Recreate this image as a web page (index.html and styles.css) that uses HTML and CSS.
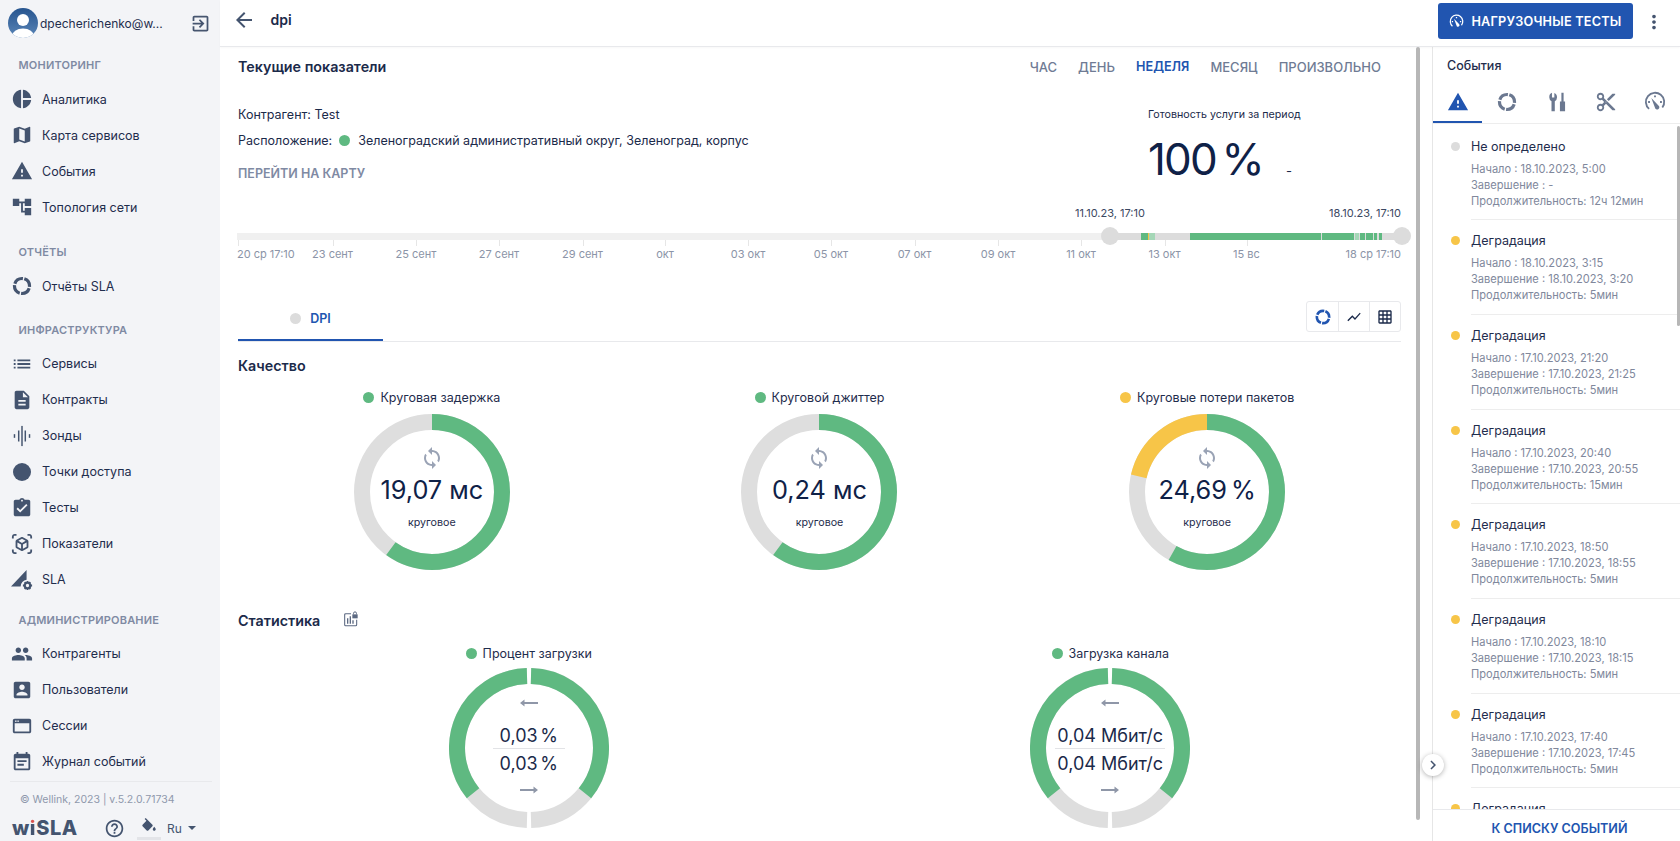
FILE: index.html
```html
<!DOCTYPE html>
<html lang="ru">
<head>
<meta charset="utf-8">
<title>dpi</title>
<link rel="stylesheet" href="styles.css">
</head>
<body>
<svg class="sprite" xmlns="http://www.w3.org/2000/svg">
  <symbol id="i-pie" viewBox="0 0 24 24"><path d="M11 2v20c-5.07-.5-9-4.79-9-10s3.93-9.5 9-10zm2.03 0v8.99H22c-.47-4.74-4.24-8.52-8.97-8.99zm0 11.01V22c4.74-.47 8.5-4.25 8.97-8.99h-8.97z"/></symbol>
  <symbol id="i-map" viewBox="0 0 24 24"><path d="M20.5 3l-.16.03L15 5.1 9 3 3.36 4.9c-.21.07-.36.25-.36.48V20.5c0 .28.22.5.5.5l.16-.03L9 18.9l6 2.1 5.64-1.9c.21-.07.36-.25.36-.48V3.5c0-.28-.22-.5-.5-.5zM15 19l-6-2.11V5l6 2.11V19z"/></symbol>
  <symbol id="i-warn" viewBox="0 0 24 24"><path d="M1 21h22L12 2 1 21zm12-3h-2v-2h2v2zm0-4h-2v-4h2v4z"/></symbol>
  <symbol id="i-topo" viewBox="0 0 24 24"><path d="M22 11V3h-7v3H9V3H2v8h7V8h2v10h4v3h7v-8h-7v3h-2V8h2v3z"/></symbol>
  <symbol id="i-ring" viewBox="0 0 24 24"><circle cx="12" cy="12" r="8.200" fill="none" stroke="currentColor" stroke-width="3.500" pathLength="100" stroke-dasharray="22 3" stroke-dashoffset="-5"/></symbol>
  <symbol id="i-list" viewBox="0 0 24 24"><path d="M3 13h2v-2H3v2zm0 4h2v-2H3v2zm0-8h2V7H3v2zm4 4h14v-2H7v2zm0 4h14v-2H7v2zM7 7v2h14V7H7z"/></symbol>
  <symbol id="i-doc" viewBox="0 0 24 24"><path d="M14 2H6c-1.1 0-1.99.9-1.99 2L4 20c0 1.1.89 2 1.99 2H18c1.1 0 2-.9 2-2V8l-6-6zm2 16H8v-2h8v2zm0-4H8v-2h8v2zm-3-5V3.5L18.5 9H13z"/></symbol>
  <symbol id="i-probe" viewBox="0 0 24 24"><rect x="3" y="10" width="1.6" height="4"/><rect x="7.6" y="6" width="1.6" height="12"/><rect x="11.2" y="1" width="1.6" height="22"/><rect x="14.8" y="6" width="1.6" height="12"/><rect x="19.4" y="10" width="1.6" height="4"/></symbol>
  <symbol id="i-test" viewBox="0 0 24 24"><path d="M19 3h-4.18C14.4 1.84 13.3 1 12 1c-1.3 0-2.4.84-2.82 2H5c-1.1 0-2 .9-2 2v14c0 1.1.9 2 2 2h14c1.1 0 2-.9 2-2V5c0-1.1-.9-2-2-2zm-7 0c.55 0 1 .45 1 1s-.45 1-1 1-1-.45-1-1 .45-1 1-1zm-2 14l-4-4 1.41-1.41L10 14.17l6.59-6.59L18 9l-8 8z"/></symbol>
  <symbol id="i-ar" viewBox="0 0 24 24"><path d="M3 4c0-.55.45-1 1-1h2V1H4C2.34 1 1 2.34 1 4v2h2V4zm0 16v-2H1v2c0 1.66 1.34 3 3 3h2v-2H4c-.55 0-1-.45-1-1zM20 1h-2v2h2c.55 0 1 .45 1 1v2h2V4c0-1.66-1.34-3-3-3zm1 19c0 .55-.45 1-1 1h-2v2h2c1.66 0 3-1.34 3-3v-2h-2v2zm-2-5.13V9.13c0-.72-.38-1.38-1-1.73l-5-2.88c-.31-.18-.65-.27-1-.27s-.69.09-1 .27L6 7.39c-.62.36-1 1.02-1 1.74v5.74c0 .72.38 1.38 1 1.73l5 2.88c.31.18.65.27 1 .27s.69-.09 1-.27l5-2.88c.62-.35 1-1.01 1-1.73zm-8 2.3l-4-2.3v-4.63l4 2.33v4.6zm1-6.33L8.04 8.53 12 6.25l3.96 2.28L12 10.84zm5 4.03l-4 2.3v-4.6l4-2.33v4.63z"/></symbol>
  <symbol id="i-sla" viewBox="0 0 24 24"><path d="M0 19L17 1v10.600a7.500 7.500 0 0 0-6.500 7.400z"/><circle cx="18" cy="18" r="3" fill="none" stroke="currentColor" stroke-width="2.400"/><path d="M17 13h2v2h-2zM17 21h2v2h-2zM13 17h2v2h-2zM21 17h2v2h-2zM14.200 14.900l1.400-1.400 1.400 1.400-1.400 1.400zM19 14.900l1.400-1.400 1.400 1.400-1.400 1.400zM14.200 21.100l1.400-1.400 1.400 1.400-1.400 1.400zM19 21.100l1.400-1.400 1.400 1.400-1.400 1.400z"/></symbol>
  <symbol id="i-people" viewBox="0 0 24 24"><path d="M16 11c1.66 0 2.99-1.34 2.99-3S17.66 5 16 5c-1.66 0-3 1.34-3 3s1.34 3 3 3zm-8 0c1.66 0 2.99-1.34 2.99-3S9.66 5 8 5C6.34 5 5 6.34 5 8s1.34 3 3 3zm0 2c-2.33 0-7 1.17-7 3.5V19h14v-2.5c0-2.33-4.67-3.5-7-3.5zm8 0c-.29 0-.62.02-.97.05 1.16.84 1.97 1.97 1.97 3.45V19h6v-2.5c0-2.33-4.67-3.5-7-3.5z"/></symbol>
  <symbol id="i-user" viewBox="0 0 24 24"><path d="M3 5v14c0 1.1.89 2 2 2h14c1.1 0 2-.9 2-2V5c0-1.1-.9-2-2-2H5c-1.11 0-2 .9-2 2zm12 4c0 1.66-1.34 3-3 3s-3-1.34-3-3 1.34-3 3-3 3 1.34 3 3zm-9 8c0-2 4-3.1 6-3.1s6 1.1 6 3.1v1H6v-1z"/></symbol>
  <symbol id="i-web" viewBox="0 0 24 24"><path d="M20 4H4c-1.1 0-2 .9-2 2v12c0 1.1.9 2 2 2h16c1.1 0 2-.9 2-2V6c0-1.1-.9-2-2-2zM4 18V9h16v9H4z"/><rect x="4.5" y="6" width="1.5" height="1.5" fill="#f3f4f7"/><rect x="7" y="6" width="1.5" height="1.5" fill="#f3f4f7"/></symbol>
  <symbol id="i-note" viewBox="0 0 24 24"><path d="M17 10H7v2h10v-2zm2-7h-1V1h-2v2H8V1H6v2H5c-1.11 0-1.99.9-1.99 2L3 19c0 1.1.89 2 2 2h14c1.1 0 2-.9 2-2V5c0-1.1-.9-2-2-2zm0 16H5V8h14v11zm-5-5H7v2h7v-2z"/></symbol>
  <symbol id="i-exit" viewBox="0 0 24 24"><path d="M10.09 15.59L11.5 17l5-5-5-5-1.41 1.41L12.67 11H3v2h9.67l-2.58 2.59zM19 3H5c-1.11 0-2 .9-2 2v4h2V5h14v14H5v-4H3v4c0 1.1.89 2 2 2h14c1.1 0 2-.9 2-2V5c0-1.1-.9-2-2-2z"/></symbol>
  <symbol id="i-help" viewBox="0 0 24 24"><path d="M11 18h2v-2h-2v2zm1-16C6.48 2 2 6.48 2 12s4.48 10 10 10 10-4.48 10-10S17.52 2 12 2zm0 18c-4.41 0-8-3.59-8-8s3.59-8 8-8 8 3.59 8 8-3.59 8-8 8zm0-14c-2.21 0-4 1.79-4 4h2c0-1.1.9-2 2-2s2 .9 2 2c0 2-3 1.75-3 5h2c0-2.25 3-2.5 3-5 0-2.21-1.79-4-4-4z"/></symbol>
  <symbol id="i-fill" viewBox="0 0 24 24"><path d="M16.56 8.94L7.62 0 6.21 1.41l2.38 2.38-5.15 5.15c-.59.59-.59 1.54 0 2.12l5.5 5.5c.29.29.68.44 1.06.44s.77-.15 1.06-.44l5.5-5.5c.59-.58.59-1.53 0-2.12zM19 11.5s-2 2.17-2 3.5c0 1.1.9 2 2 2s2-.9 2-2c0-1.33-2-3.5-2-3.5z"/></symbol>
  <symbol id="i-back" viewBox="0 0 24 24"><path d="M20 11H7.83l5.59-5.59L12 4l-8 8 8 8 1.41-1.41L7.83 13H20v-2z"/></symbol>
  <symbol id="i-more" viewBox="0 0 24 24"><path d="M12 8c1.1 0 2-.9 2-2s-.9-2-2-2-2 .9-2 2 .9 2 2 2zm0 2c-1.1 0-2 .9-2 2s.9 2 2 2 2-.9 2-2-.9-2-2-2zm0 6c-1.1 0-2 .9-2 2s.9 2 2 2 2-.9 2-2-.9-2-2-2z"/></symbol>
  <symbol id="i-gauge" viewBox="0 0 24 24"><path d="M5.500 19.500A10 10 0 1 1 20 18" fill="none" stroke="currentColor" stroke-width="2"/><path d="M11 4.800h2v2h-2zM4.500 11h2v2h-2zM17.500 11h2v2h-2z"/><path d="M8 7.500l8 8.500a2.400 2.400 0 1 1-4 2.200z"/></symbol>
  <symbol id="i-tools" viewBox="0 0 24 24"><path d="M6.500 2v5.200h2.600V2.200A5 5 0 0 1 12 7a5 5 0 0 1-2.400 4.200V22H6V11.200A5 5 0 0 1 3.600 7a5 5 0 0 1 2.900-5z"/><path d="M16.800 2h2.400v9.400h1.600V22h-5.600V11.400h1.600z"/></symbol>
  <symbol id="i-cut" viewBox="0 0 24 24"><path d="M9.64 7.64c.23-.5.36-1.05.36-1.64 0-2.21-1.79-4-4-4S2 3.79 2 6s1.79 4 4 4c.59 0 1.14-.13 1.64-.36L10 12l-2.36 2.36C7.14 14.13 6.59 14 6 14c-2.21 0-4 1.79-4 4s1.79 4 4 4 4-1.79 4-4c0-.59-.13-1.14-.36-1.64L12 14l7 7h3v-1L9.64 7.64zM6 8c-1.1 0-2-.89-2-2s.9-2 2-2 2 .89 2 2-.9 2-2 2zm0 12c-1.1 0-2-.89-2-2s.9-2 2-2 2 .89 2 2-.9 2-2 2zm6-7.5c-.28 0-.5-.22-.5-.5s.22-.5.5-.5.5.22.5.5-.22.5-.5.5zM19 3l-6 6 2 2 7-7V3h-3z"/></symbol>
  <symbol id="i-chart" viewBox="0 0 24 24"><path d="M3.500 18.490l6-6.010 4 4L22 6.920l-1.410-1.410-7.090 7.970-4-4L2 16.990z"/></symbol>
  <symbol id="i-grid" viewBox="0 0 24 24"><path d="M20 2H4c-1.100 0-2 .9-2 2v16c0 1.100.9 2 2 2h16c1.100 0 2-.9 2-2V4c0-1.100-.9-2-2-2zM8 20H4v-4h4v4zm0-6H4v-4h4v4zm0-6H4V4h4v4zm6 12h-4v-4h4v4zm0-6h-4v-4h4v4zm0-6h-4V4h4v4zm6 12h-4v-4h4v4zm0-6h-4v-4h4v4zm0-6h-4V4h4v4z"/></symbol>
  <symbol id="i-sync" viewBox="0 0 24 24"><path d="M12 4V1L8 5l4 4V6c3.31 0 6 2.69 6 6 0 1.01-.25 1.97-.7 2.8l1.46 1.46C19.54 15.03 20 13.57 20 12c0-4.42-3.58-8-8-8zm0 14c-3.31 0-6-2.69-6-6 0-1.01.25-1.97.7-2.8L5.24 7.74C4.46 8.97 4 10.43 4 12c0 4.42 3.58 8 8 8v3l4-4-4-4v3z"/></symbol>
  <symbol id="i-left" viewBox="0 0 18 10"><path d="M0 5l4.500-3.500V4H18v2H4.500v2.500z"/></symbol>
  <symbol id="i-right" viewBox="0 0 18 10"><path d="M18 5l-4.500-3.500V4H0v2h13.500v2.500z"/></symbol>
  <symbol id="i-stat" viewBox="0 0 24 24"><path d="M12 4H4a1.500 1.500 0 0 0-1.500 1.500v15A1.500 1.500 0 0 0 4 22h15a1.500 1.500 0 0 0 1.500-1.500V13" fill="none" stroke="currentColor" stroke-width="1.600"/><path d="M6 11h2v8H6zM10 8h2v11h-2zM14 14h2v5h-2z"/><path d="M14 5h8v6h-8z"/><path d="M15.800 5V3.500a2.200 2.200 0 0 1 4.400 0V5" fill="none" stroke="currentColor" stroke-width="1.500"/></symbol>
  <symbol id="i-chev" viewBox="0 0 24 24"><path d="M10 6L8.590 7.410 13.170 12l-4.580 4.590L10 18l6-6z"/></symbol>
</svg>

<div class="app">
  <aside class="sidebar">
    <div class="user">
      <svg class="avatar" viewBox="0 0 30 30"><defs><linearGradient id="av" x1="0" y1="0" x2="0" y2="1"><stop offset="0" stop-color="#27558f"/><stop offset="1" stop-color="#5b86b8"/></linearGradient><clipPath id="avc"><circle cx="15" cy="15" r="15"/></clipPath></defs><circle cx="15" cy="15" r="15" fill="url(#av)"/><circle cx="15" cy="12" r="6" fill="#fff"/><ellipse cx="15" cy="28" rx="11" ry="7.500" fill="#fff" clip-path="url(#avc)"/></svg>
      <span class="user-name">dpecherichenko@w...</span>
      <svg class="ico exit"><use href="#i-exit"/></svg>
    </div>
    <div class="nav-label nav-label-first">Мониторинг</div>
    <a class="nav-item"><svg class="ico"><use href="#i-pie"/></svg>Аналитика</a>
    <a class="nav-item"><svg class="ico"><use href="#i-map"/></svg>Карта сервисов</a>
    <a class="nav-item"><svg class="ico"><use href="#i-warn"/></svg>События</a>
    <a class="nav-item"><svg class="ico"><use href="#i-topo"/></svg>Топология сети</a>
    <div class="nav-label nav-label-reports">Отчёты</div>
    <a class="nav-item"><svg class="ico"><use href="#i-ring"/></svg>Отчёты SLA</a>
    <div class="nav-label nav-label-infra">Инфраструктура</div>
    <a class="nav-item"><svg class="ico"><use href="#i-list"/></svg>Сервисы</a>
    <a class="nav-item"><svg class="ico"><use href="#i-doc"/></svg>Контракты</a>
    <a class="nav-item"><svg class="ico"><use href="#i-probe"/></svg>Зонды</a>
    <a class="nav-item"><span class="nav-disc"></span>Точки доступа</a>
    <a class="nav-item"><svg class="ico"><use href="#i-test"/></svg>Тесты</a>
    <a class="nav-item"><svg class="ico"><use href="#i-ar"/></svg>Показатели</a>
    <a class="nav-item"><svg class="ico"><use href="#i-sla"/></svg>SLA</a>
    <div class="nav-label nav-label-admin">Администрирование</div>
    <a class="nav-item"><svg class="ico"><use href="#i-people"/></svg>Контрагенты</a>
    <a class="nav-item"><svg class="ico"><use href="#i-user"/></svg>Пользователи</a>
    <a class="nav-item"><svg class="ico"><use href="#i-web"/></svg>Сессии</a>
    <a class="nav-item"><svg class="ico"><use href="#i-note"/></svg>Журнал событий</a>
    <div class="side-foot">
      <div class="copy">© Wellink, 2023 | v.5.2.0.71734</div>
      <div class="brand-row">
        <span class="logo">w<span class="logo-i">i</span>SLA</span>
        <svg class="ico help"><use href="#i-help"/></svg>
        <span class="fill-wrap"><svg class="ico fill"><use href="#i-fill"/></svg></span>
        <span class="lang">Ru</span><span class="caret"></span>
      </div>
    </div>
  </aside>

  <div class="main">
    <header class="topbar">
      <svg class="ico back"><use href="#i-back"/></svg>
      <span class="page-title">dpi</span>
      <button class="primary"><svg class="ico btn-ico"><use href="#i-gauge"/></svg>Нагрузочные тесты</button>
      <svg class="ico more"><use href="#i-more"/></svg>
    </header>

    <div class="body">
      <section class="content">
        <div class="head-row">
          <h2 class="h">Текущие показатели</h2>
          <nav class="periods">
            <span>Час</span><span>День</span><span class="on">Неделя</span><span>Месяц</span><span>Произвольно</span>
          </nav>
        </div>

        <div class="info">
          <div class="info-left">
            <div class="info-line">Контрагент: Test</div>
            <div class="info-line">Расположение: <span class="dot green addr-dot"></span> Зеленоградский административный округ, Зеленоград, корпус</div>
            <div class="map-link">Перейти на карту</div>
          </div>
          <div class="avail">
            <div class="avail-cap">Готовность услуги за период</div>
            <div class="avail-row"><span class="avail-val">100 %</span><span class="avail-dash">-</span></div>
          </div>
        </div>

        <div class="timeline">
          <div class="tl-track"></div>
          <div class="tl-range"></div>
          <i class="tl-seg" style="left:903px;width:7px"></i>
          <i class="tl-seg yellow" style="left:910px;width:1px"></i>
          <i class="tl-seg light" style="left:911px;width:6px"></i>
          <i class="tl-seg" style="left:952px;width:131px"></i>
          <i class="tl-seg" style="left:1084px;width:32px"></i>
          <i class="tl-seg light" style="left:1117px;width:4px"></i>
          <i class="tl-seg" style="left:1122px;width:5px"></i>
          <i class="tl-seg" style="left:1128px;width:7px"></i>
          <i class="tl-seg" style="left:1136px;width:3px"></i>
          <i class="tl-seg" style="left:1141px;width:3px"></i>
          <i class="tl-handle" style="left:872px"></i>
          <i class="tl-handle" style="left:1164px"></i>
          <span class="tl-date tl-date-a">11.10.23, 17:10</span>
          <span class="tl-date tl-date-b">18.10.23, 17:10</span>
          <i class="tick" style="left:0"></i><span class="tl-lab first">20 ср 17:10</span>
          <i class="tick" style="left:94.500px"></i><span class="tl-lab" style="left:94.500px">23 сент</span>
          <i class="tick" style="left:178px"></i><span class="tl-lab" style="left:178px">25 сент</span>
          <i class="tick" style="left:261px"></i><span class="tl-lab" style="left:261px">27 сент</span>
          <i class="tick" style="left:344.500px"></i><span class="tl-lab" style="left:344.500px">29 сент</span>
          <i class="tick" style="left:427px"></i><span class="tl-lab" style="left:427px">окт</span>
          <i class="tick" style="left:510px"></i><span class="tl-lab" style="left:510px">03 окт</span>
          <i class="tick" style="left:593px"></i><span class="tl-lab" style="left:593px">05 окт</span>
          <i class="tick" style="left:676.500px"></i><span class="tl-lab" style="left:676.500px">07 окт</span>
          <i class="tick" style="left:760px"></i><span class="tl-lab" style="left:760px">09 окт</span>
          <i class="tick" style="left:843px"></i><span class="tl-lab" style="left:843px">11 окт</span>
          <i class="tick" style="left:926.500px"></i><span class="tl-lab" style="left:926.500px">13 окт</span>
          <i class="tick" style="left:1008.500px"></i><span class="tl-lab" style="left:1008.500px">15 вс</span>
          <span class="tl-lab last">18 ср 17:10</span>
        </div>

        <div class="tabs">
          <div class="tab"><span class="dot grey"></span>DPI</div>
          <div class="views">
            <span class="view"><svg class="ico view-on"><use href="#i-ring"/></svg></span>
            <span class="view"><svg class="ico"><use href="#i-chart"/></svg></span>
            <span class="view"><svg class="ico"><use href="#i-grid"/></svg></span>
          </div>
        </div>

        <h2 class="h h-quality">Качество</h2>
        <div class="gauges g3">
          <div class="gauge">
            <div class="g-title"><span class="dot green"></span>Круговая задержка</div>
            <div class="donut">
              <svg class="ring" viewBox="0 0 156 156"><circle class="r-grey" cx="78" cy="78" r="70" pathLength="100"/><circle class="r-green" cx="78" cy="78" r="70" pathLength="100" stroke-dasharray="60 40"/></svg>
              <div class="d-in"><svg class="ico sync"><use href="#i-sync"/></svg><div class="d-val">19,07 мс</div><div class="d-sub">круговое</div></div>
            </div>
          </div>
          <div class="gauge">
            <div class="g-title"><span class="dot green"></span>Круговой джиттер</div>
            <div class="donut">
              <svg class="ring" viewBox="0 0 156 156"><circle class="r-grey" cx="78" cy="78" r="70" pathLength="100"/><circle class="r-green" cx="78" cy="78" r="70" pathLength="100" stroke-dasharray="60 40"/></svg>
              <div class="d-in"><svg class="ico sync"><use href="#i-sync"/></svg><div class="d-val">0,24 мс</div><div class="d-sub">круговое</div></div>
            </div>
          </div>
          <div class="gauge">
            <div class="g-title"><span class="dot yellow"></span>Круговые потери пакетов</div>
            <div class="donut">
              <svg class="ring" viewBox="0 0 156 156"><circle class="r-grey" cx="78" cy="78" r="70" pathLength="100"/><circle class="r-green" cx="78" cy="78" r="70" pathLength="100" stroke-dasharray="58.200 41.800"/><circle class="r-yellow" cx="78" cy="78" r="70" pathLength="100" stroke-dasharray="21.400 78.600" stroke-dashoffset="-78.600"/></svg>
              <div class="d-in"><svg class="ico sync"><use href="#i-sync"/></svg><div class="d-val pct">24,69 %</div><div class="d-sub">круговое</div></div>
            </div>
          </div>
        </div>

        <div class="stat-head"><h2 class="h">Статистика</h2><svg class="ico stat-ico"><use href="#i-stat"/></svg></div>
        <div class="gauges g2">
          <div class="gauge">
            <div class="g-title"><span class="dot green"></span>Процент загрузки</div>
            <div class="donut donut2">
              <svg class="ring" viewBox="0 0 160 160"><path class="h-grey" d="M82 8.030A72 72 0 0 1 82 151.970"/><path class="h-grey" d="M78 8.030A72 72 0 0 0 78 151.970"/><path class="h-green" d="M82 8.030A72 72 0 0 1 135.950 125.300"/><path class="h-green" d="M78 8.030A72 72 0 0 0 24.050 125.300"/></svg>
              <div class="d-in2"><svg class="arrow"><use href="#i-left"/></svg><div class="v2 v2a pct">0,03 %</div><div class="v2 v2b pct">0,03 %</div><svg class="arrow"><use href="#i-right"/></svg></div>
            </div>
          </div>
          <div class="gauge">
            <div class="g-title"><span class="dot green"></span>Загрузка канала</div>
            <div class="donut donut2">
              <svg class="ring" viewBox="0 0 160 160"><path class="h-grey" d="M82 8.030A72 72 0 0 1 82 151.970"/><path class="h-grey" d="M78 8.030A72 72 0 0 0 78 151.970"/><path class="h-green" d="M82 8.030A72 72 0 0 1 135.950 125.300"/><path class="h-green" d="M78 8.030A72 72 0 0 0 24.050 125.300"/></svg>
              <div class="d-in2"><svg class="arrow"><use href="#i-left"/></svg><div class="v2 v2a">0,04 Мбит/с</div><div class="v2 v2b">0,04 Мбит/с</div><svg class="arrow"><use href="#i-right"/></svg></div>
            </div>
          </div>
        </div>
        <div class="scroll-main"></div>
      </section>

      <aside class="panel">
        <button class="collapse"><svg class="ico"><use href="#i-chev"/></svg></button>
        <div class="panel-title">События</div>
        <div class="panel-tabs">
          <span class="ptab on"><svg class="ico"><use href="#i-warn"/></svg></span>
          <span class="ptab"><svg class="ico"><use href="#i-ring"/></svg></span>
          <span class="ptab"><svg class="ico"><use href="#i-tools"/></svg></span>
          <span class="ptab"><svg class="ico"><use href="#i-cut"/></svg></span>
          <span class="ptab"><svg class="ico"><use href="#i-gauge"/></svg></span>
        </div>
        <div class="events">
          <div class="scroll-side"></div>
          <div class="ev"><span class="dot grey ev-dot"></span><div class="ev-b"><div class="ev-t">Не определено</div><div class="ev-l">Начало : 18.10.2023, 5:00</div><div class="ev-l">Завершение : -</div><div class="ev-l">Продолжительность: 12ч 12мин</div></div></div>
          <div class="ev"><span class="dot yellow ev-dot"></span><div class="ev-b"><div class="ev-t">Деградация</div><div class="ev-l">Начало : 18.10.2023, 3:15</div><div class="ev-l">Завершение : 18.10.2023, 3:20</div><div class="ev-l">Продолжительность: 5мин</div></div></div>
          <div class="ev"><span class="dot yellow ev-dot"></span><div class="ev-b"><div class="ev-t">Деградация</div><div class="ev-l">Начало : 17.10.2023, 21:20</div><div class="ev-l">Завершение : 17.10.2023, 21:25</div><div class="ev-l">Продолжительность: 5мин</div></div></div>
          <div class="ev"><span class="dot yellow ev-dot"></span><div class="ev-b"><div class="ev-t">Деградация</div><div class="ev-l">Начало : 17.10.2023, 20:40</div><div class="ev-l">Завершение : 17.10.2023, 20:55</div><div class="ev-l">Продолжительность: 15мин</div></div></div>
          <div class="ev"><span class="dot yellow ev-dot"></span><div class="ev-b"><div class="ev-t">Деградация</div><div class="ev-l">Начало : 17.10.2023, 18:50</div><div class="ev-l">Завершение : 17.10.2023, 18:55</div><div class="ev-l">Продолжительность: 5мин</div></div></div>
          <div class="ev"><span class="dot yellow ev-dot"></span><div class="ev-b"><div class="ev-t">Деградация</div><div class="ev-l">Начало : 17.10.2023, 18:10</div><div class="ev-l">Завершение : 17.10.2023, 18:15</div><div class="ev-l">Продолжительность: 5мин</div></div></div>
          <div class="ev"><span class="dot yellow ev-dot"></span><div class="ev-b"><div class="ev-t">Деградация</div><div class="ev-l">Начало : 17.10.2023, 17:40</div><div class="ev-l">Завершение : 17.10.2023, 17:45</div><div class="ev-l">Продолжительность: 5мин</div></div></div>
          <div class="ev"><span class="dot yellow ev-dot"></span><div class="ev-b"><div class="ev-t">Деградация</div></div></div>
        </div>
        <div class="panel-foot">К списку событий</div>
      </aside>
    </div>
  </div>
</div>
</body>
</html>
```

FILE: styles.css
```css
* { box-sizing: border-box; }
html, body { margin: 0; height: 100%; overflow: hidden; }
body { font-family: Inter, "Noto Sans", sans-serif; font-size: 12.500px; color: #1b2a4a; background: #fff; }
.sprite { display: none; }
.ico { display: block; width: 24px; height: 24px; fill: currentColor; flex: none; }

.app { display: flex; height: 841px; }

/* sidebar */
.sidebar { width: 220px; flex: none; background: #f3f4f7; display: flex; flex-direction: column; overflow: hidden; }
.user { display: flex; flex: none; align-items: center; height: 41px; padding: 5px 0 0 8px; }
.avatar { width: 30px; height: 30px; flex: none; }
.user-name { margin-left: 2px; font-size: 12px; color: #1f2d4d; width: 150px; white-space: nowrap; }
.exit { width: 21px; height: 21px; color: #46556f; }
.nav-label { flex: none; height: 20px; line-height: 20px; padding-left: 18.500px; font-size: 11px; font-weight: 600; letter-spacing: .2px; text-transform: uppercase; color: #7f8aa3; margin-bottom: 6px; }
.nav-label-first { margin-top: 14px; }
.nav-label-reports { margin-top: 17px; }
.nav-label-infra { margin-top: 16px; margin-bottom: 5.500px; }
.nav-label-admin { margin-top: 12px; }
.nav-item { display: flex; align-items: center; height: 36px; flex: none; font-size: 12.500px; color: #1f2d4d; padding-left: 11px; }
.nav-item .ico { width: 22px; height: 22px; margin-right: 9px; color: #44546f; }
.nav-disc { width: 18px; height: 18px; border-radius: 50%; background: #44546f; margin: 0 11px 0 2px; flex: none; }
.side-foot { flex: none; margin: 1.500px 8px 0 10px; border-top: 1px solid #e8e9ec; }
.copy { font-size: 10.500px; color: #8f98ac; padding: 10px 0 0 10px; line-height: 16px; }
.brand-row { display: flex; align-items: center; height: 30px; margin: 5px 0 0 2px; }
.logo { font-size: 20px; font-weight: 800; letter-spacing: .6px; color: #44546f; width: 92px; }
.logo-i { background: linear-gradient(#d9534f 32%, #44546f 32%); -webkit-background-clip: text; background-clip: text; color: transparent; }
.help { width: 21px; height: 21px; color: #44546f; }
.fill-wrap { display: block; margin: 2px 0 0 12px; padding: 0 3px 1px; border-bottom: 3px solid #e3e4e8; }
.fill { width: 18px; height: 18px; color: #44546f; }
.lang { margin-left: 6px; font-size: 12px; color: #44546f; }
.caret { margin-left: 6px; border: 4px solid transparent; border-top: 4.500px solid #44546f; border-bottom: 0; }

/* main */
.main { flex: 1; min-width: 0; display: flex; flex-direction: column; }
.topbar { height: 47px; flex: none; display: flex; align-items: flex-start; border-bottom: 1px solid #e8e9ec; box-shadow: 0 1px 2px rgba(0,0,0,.03); position: relative; z-index: 2; background: #fff; }
.back { width: 24px; height: 24px; color: #44546f; margin: 8px 0 0 12px; }
.page-title { font-size: 14px; font-weight: 600; margin: 11px 0 0 14.500px; line-height: 18px; }
.primary { margin: 3px 0 0 auto; width: 195px; height: 36px; background: #2155b0; color: #fff; border: 0; border-radius: 3px; font: 600 12.700px Inter, sans-serif; letter-spacing: .2px; text-transform: uppercase; display: flex; align-items: center; justify-content: center; gap: 7px; padding: 0; }
.btn-ico { width: 15px; height: 15px; }
.more { width: 22px; height: 22px; color: #44546f; margin: 11px 15px 0 10px; }

.body { flex: 1; min-height: 0; display: flex; }
.content { flex: 1; min-width: 0; padding: 0 31px 0 18px; position: relative; overflow: hidden; }
.head-row { display: flex; justify-content: space-between; align-items: center; height: 40px; }
.h { margin: 0; font-size: 14.300px; font-weight: 600; color: #1b2a4a; line-height: 20px; }
.periods { display: flex; gap: 21px; margin-right: 20px; font-size: 13px; font-weight: 500; color: #6f7b94; text-transform: uppercase; }
.periods .on { color: #2155b0; font-weight: 600; font-size: 12.700px; }

.info { display: flex; justify-content: space-between; height: 113px; padding-top: 16px; }
.info-line { line-height: 24px; margin-bottom: 2px; font-size: 12.500px; }
.dot { display: inline-block; width: 11px; height: 11px; border-radius: 50%; flex: none; }
.green { background: #5fb981; }
.yellow { background: #f7c548; }
.grey { background: #dcdcdc; }
.addr-dot { margin: 0 5px 0 3px; vertical-align: -1px; }
.map-link { margin-top: 11px; line-height: 20px; font-size: 12.500px; font-weight: 600; color: #7f8aa3; text-transform: uppercase; }
.avail { width: 253px; }
.avail-cap { font-size: 10.700px; line-height: 24px; }
.avail-row { display: flex; align-items: flex-end; margin-top: 6px; }
.avail-val { font-size: 44px; line-height: 52px; font-weight: 400; color: #0f2147; letter-spacing: -1.800px; word-spacing: -5px; }
.avail-dash { margin: 0 0 5px 23px; font-size: 13px; line-height: 18px; }

.timeline { position: relative; height: 100px; }
.tl-track { position: absolute; left: -1px; width: 1165px; top: 33px; height: 7px; background: #f0f0f0; }
.tl-range { position: absolute; left: 872px; width: 292px; top: 33px; height: 7px; background: #dcdcdc; }
.tl-seg { position: absolute; top: 33px; height: 7px; background: #5fb981; }
.tl-seg.yellow { background: #f7c548; }
.tl-seg.light { background: #a5d7b7; }
.tl-handle { position: absolute; top: 27px; width: 18px; height: 18px; margin-left: -9px; border-radius: 50%; background: #dcdcdc; }
.tl-date { position: absolute; top: 6px; font-size: 11px; line-height: 14px; color: #3b4862; white-space: nowrap; }
.tl-date-a { left: 837px; }
.tl-date-b { right: 0; }
.tick { position: absolute; top: 40px; width: 1px; height: 6px; background: #e6e6e6; }
.tl-lab { position: absolute; top: 47px; font-size: 11px; line-height: 14px; color: #8b94a7; white-space: nowrap; transform: translateX(-50%); }
.tl-lab.first { left: -1px; transform: none; }
.tl-lab.last { right: 0; transform: none; }

.tabs { display: flex; justify-content: space-between; align-items: flex-start; height: 41px; border-bottom: 1px solid #e8e9ec; margin-top: 1px; }
.tab { width: 145px; height: 40px; border-bottom: 2px solid #2155b0; display: flex; align-items: center; justify-content: center; gap: 9px; font-size: 12.500px; font-weight: 600; color: #2155b0; padding-bottom: 4px; }
.views { display: flex; height: 31px; border: 1px solid #e8e9ec; border-radius: 3px; }
.view { width: 31px; display: flex; align-items: center; justify-content: center; color: #1b2a4a; }
.view + .view { border-left: 1px solid #e8e9ec; }
.view .ico { width: 16px; height: 16px; }
.view .view-on { width: 18px; height: 18px; color: #2155b0; }

.h-quality { margin-top: 14px; }
.gauges { display: grid; }
.g3 { grid-template-columns: repeat(3, 1fr); margin-top: 11px; }
.g2 { grid-template-columns: repeat(2, 1fr); margin-top: 12px; }
.gauge { display: flex; flex-direction: column; align-items: center; }
.g-title { display: flex; align-items: center; gap: 6px; height: 20px; font-size: 12.500px; color: #1f2d4d; }
.donut { display: grid; width: 156px; height: 156px; margin-top: 7px; }
.donut > * { grid-area: 1 / 1; }
.ring { width: 100%; height: 100%; display: block; }
.ring circle { fill: none; stroke-width: 16; transform: rotate(-90deg); transform-origin: 50% 50%; }
.r-grey { stroke: #dedede; }
.r-green { stroke: #5fb981; }
.r-yellow { stroke: #f7c548; }
.d-in { display: flex; flex-direction: column; align-items: center; padding-top: 32px; }
.sync { width: 24px; height: 24px; color: #9aa3b5; }
.d-val { margin-top: 5px; font-size: 25.300px; line-height: 30px; color: #0f2147; white-space: nowrap; }
.d-val.pct { word-spacing: -3px; }
.d-sub { margin-top: 11px; font-size: 10.700px; line-height: 14px; color: #1f2d4d; }

.stat-head { display: flex; align-items: flex-start; margin-top: 41px; height: 20px; }
.stat-ico { width: 16px; height: 16px; color: #5c6982; margin: 0 0 0 23px; }
.donut2 { width: 160px; height: 160px; margin-top: 5px; }
.ring path { fill: none; stroke-width: 16; }
.h-grey { stroke: #dedede; }
.h-green { stroke: #5fb981; }
.d-in2 { display: flex; flex-direction: column; align-items: center; padding-top: 30px; }
.arrow { width: 18px; height: 10px; fill: #8f97a8; display: block; }
.v2 { font-size: 18px; white-space: nowrap; color: #1b2a4a; text-align: center; padding: 0 2px; min-width: 72px; }
.v2.pct { word-spacing: -2.500px; }
.v2a { margin-top: 15.500px; line-height: 24px; border-bottom: 1px solid #e2e3e6; }
.v2b { margin-top: 1px; margin-bottom: 8.500px; line-height: 27px; }

.scroll-main { position: absolute; right: 12px; top: 0; bottom: 21px; width: 4px; border-radius: 2px; background: #b7b7b7; }

/* right panel */
.panel { width: 248px; flex: none; display: flex; flex-direction: column; border-left: 1px solid #e6e6e6; position: relative; }
.panel-title { font-size: 12.500px; font-weight: 500; color: #1f2d4d; margin: 9px 0 0 14px; line-height: 20px; }
.panel-tabs { display: flex; height: 43px; margin-top: 5px; border-bottom: 1px solid #ededed; flex: none; }
.ptab { width: 51px; height: 42px; display: flex; align-items: center; justify-content: center; color: #6b7890; }
.ptab .ico { width: 22px; height: 22px; }
.ptab.on { color: #2155b0; border-bottom: 2px solid #2155b0; padding-top: 2px; }
.events { flex: 1; min-height: 0; overflow: hidden; padding: 1.500px 0 0 18px; position: relative; }
.ev { display: flex; height: 94.700px; padding-top: 11px; }
.ev-dot { width: 9px; height: 9px; margin-top: 5px; }
.ev-b { flex: 1; margin-left: 11px; border-bottom: 1px solid #ededed; height: 83.700px; }
.ev-t { font-size: 12.500px; line-height: 20px; color: #1f2d4d; margin-bottom: 4px; }
.ev-l { font-size: 11.100px; line-height: 16px; color: #80889c; white-space: nowrap; }
.scroll-side { position: absolute; right: 0; top: 2px; width: 3px; height: 200px; background: #b7b7b7; border-radius: 2px; }
.panel-foot { height: 32px; flex: none; border-top: 1px solid #e8e9ec; text-align: center; line-height: 38px; font-size: 12.600px; font-weight: 600; color: #2155b0; text-transform: uppercase; background: #fff; padding-left: 6px; }
.collapse { position: absolute; left: -11px; top: 707px; width: 22px; height: 22px; padding: 2px; border: 0; border-radius: 50%; background: #fff; box-shadow: 0 1px 5px rgba(0,0,0,.3); color: #44546f; z-index: 3; }
.collapse .ico { width: 18px; height: 18px; }
```
